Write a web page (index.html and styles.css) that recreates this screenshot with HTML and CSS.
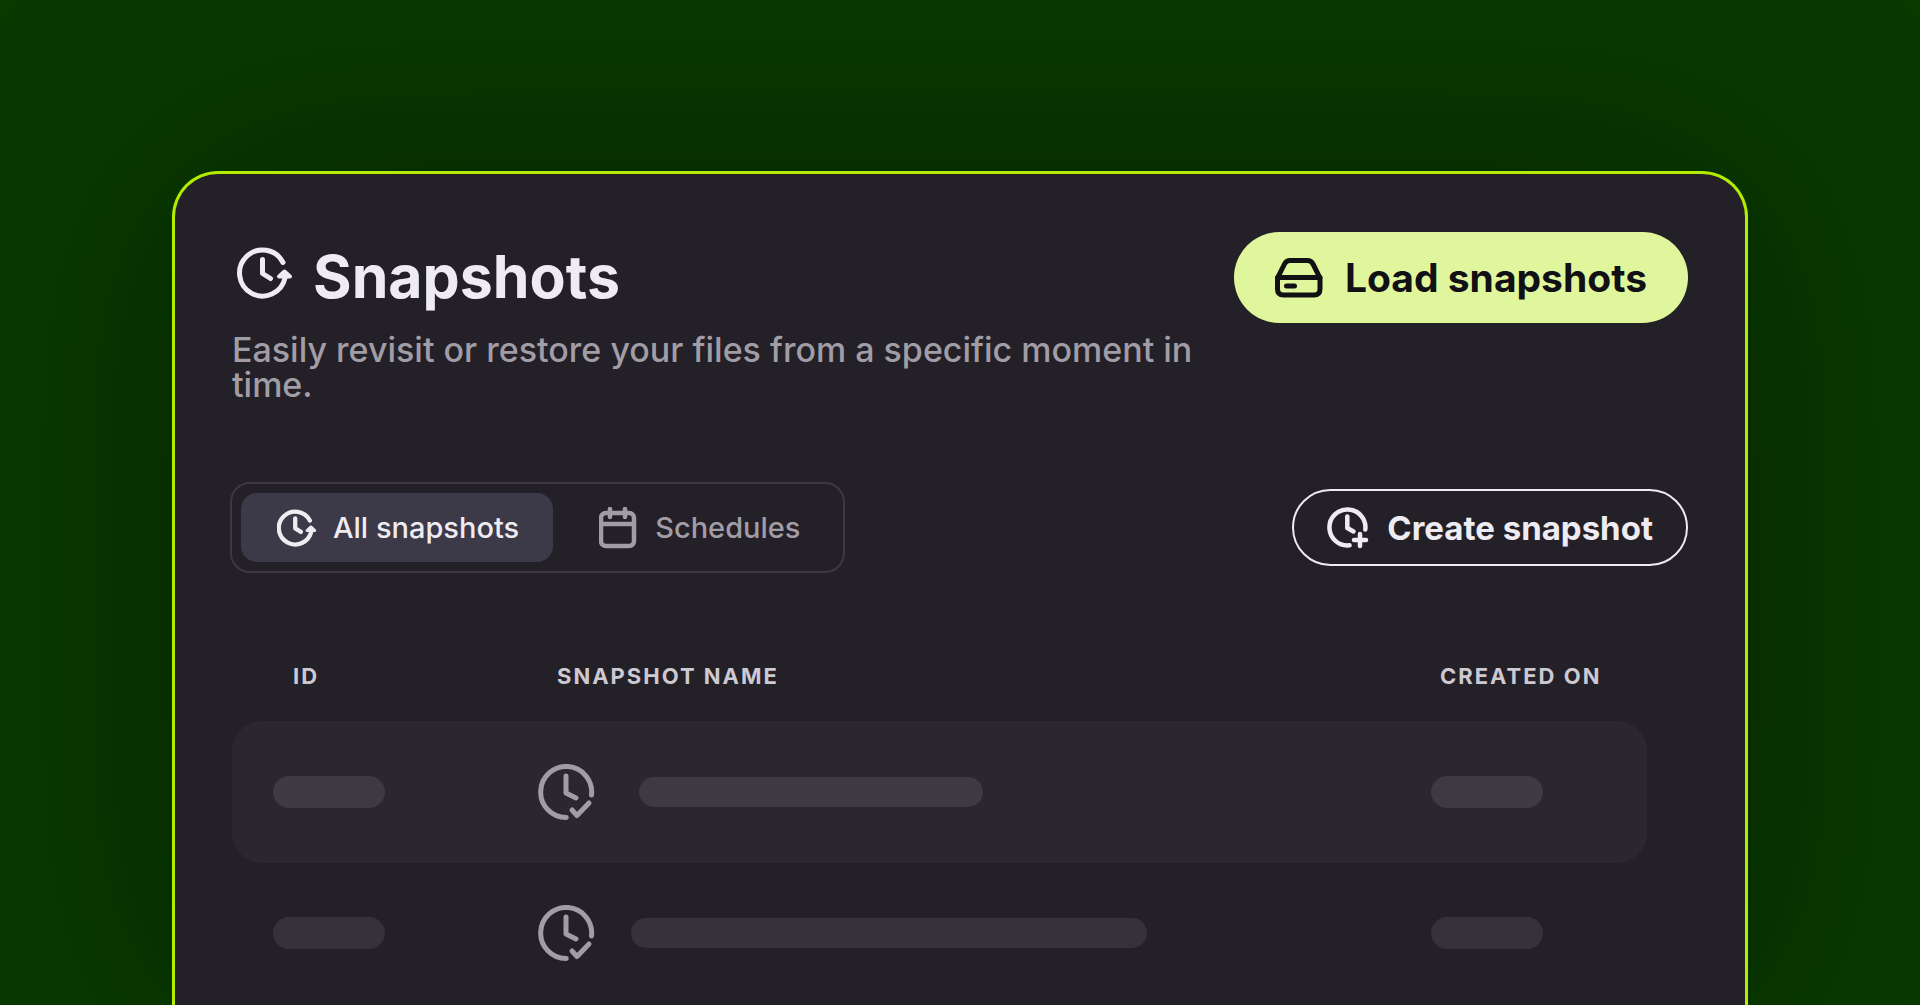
FILE: index.html
```html
<!DOCTYPE html>
<html lang="en">
<head>
    <meta charset="UTF-8">
    <meta name="viewport" content="width=device-width, initial-scale=1.0">
    <title>Snapshots</title>
    <link rel="stylesheet" href="styles.css">
</head>
<body>
    <main class="card">
        <header class="header">
            <div class="intro">
                <h1 class="title">
                    <svg class="title-icon" width="56" height="52" viewBox="0 0 56 52" aria-hidden="true">
                        <path class="line" d="M46 15.5A23 23 0 1 0 48 31"/>
                        <path class="line" d="M25.5 12.5V26.5L33.5 31.5"/>
                        <path class="tip" d="M47.5 24.5L42 29.5H53Z"/>
                    </svg>
                    Snapshots
                </h1>
                <p class="subtitle">Easily revisit or restore your files from a specific moment in time.</p>
            </div>
            <button type="button" class="button button-primary">
                <svg width="48" height="40" viewBox="0 0 48 40" aria-hidden="true">
                    <path class="line" d="M2.5 20L9.5 6Q11.3 2.5 15 2.5H32.5Q36.2 2.5 38 6L45 20V31Q45 37 39 37H8.5Q2.5 37 2.5 31Z"/>
                    <path class="line" d="M2.5 19.5H45M11.5 28H19.5"/>
                </svg>
                Load snapshots
            </button>
        </header>

        <div class="toolbar">
            <nav class="tabs">
                <button type="button" class="tab tab-active">
                    <svg width="40" height="38" viewBox="0 0 56 52" aria-hidden="true">
                        <path class="line" d="M46 15.5A23 23 0 1 0 48 31"/>
                        <path class="line" d="M25.5 12.5V26.5L33.5 31.5"/>
                        <path class="tip" d="M47.5 24.5L42 29.5H53Z"/>
                    </svg>
                    All snapshots
                </button>
                <button type="button" class="tab">
                    <svg width="38" height="42" viewBox="0 0 38 42" aria-hidden="true">
                        <rect class="line" x="2" y="6" width="33" height="33" rx="5"/>
                        <path class="line" d="M2 17H35M11 2V10M26 2V10"/>
                    </svg>
                    Schedules
                </button>
            </nav>
            <button type="button" class="button button-outline">
                <svg width="42" height="42" viewBox="0 0 42 42" aria-hidden="true">
                    <path class="line" d="M38.3 22.5A18 18 0 1 0 22.5 38.3"/>
                    <path class="line" d="M20.3 9.5V21L26.5 24.5M33 27V39M27 33H39"/>
                </svg>
                Create snapshot
            </button>
        </div>

        <table class="table">
            <thead>
                <tr>
                    <th class="col-id">ID</th>
                    <th class="col-name">Snapshot name</th>
                    <th class="col-date">Created on</th>
                </tr>
            </thead>
            <tbody>
                <tr class="row-active">
                    <td class="cell-id"><div class="bar"></div></td>
                    <td>
                        <div class="name">
                            <svg width="57" height="57" viewBox="0 0 57 57" aria-hidden="true">
                                <path class="line" d="M53.5 31A25.5 25.5 0 1 0 28.3 53.5"/>
                                <path class="line" d="M28 12V29L38 34M34 46L39 51.5L51 39"/>
                            </svg>
                            <div class="bar bar-short"></div>
                        </div>
                    </td>
                    <td><div class="bar"></div></td>
                </tr>
                <tr>
                    <td class="cell-id"><div class="bar"></div></td>
                    <td>
                        <div class="name">
                            <svg width="57" height="57" viewBox="0 0 57 57" aria-hidden="true">
                                <path class="line" d="M53.5 31A25.5 25.5 0 1 0 28.3 53.5"/>
                                <path class="line" d="M28 12V29L38 34M34 46L39 51.5L51 39"/>
                            </svg>
                            <div class="bar bar-long"></div>
                        </div>
                    </td>
                    <td><div class="bar"></div></td>
                </tr>
            </tbody>
        </table>
    </main>
</body>
</html>
```
FILE: styles.css
```css
* {
    box-sizing: border-box;
}

body {
    margin: 0;
    padding: 171px 172px 0;
    height: 100vh;
    display: flex;
    overflow: hidden;
    background: #093a00;
    color: #eeebf2;
    font-family: Inter, "Liberation Sans", sans-serif;
}

.card {
    flex: 1;
    min-width: 0;
    padding: 58px 57px 0;
    border: 3px solid #b4ec00;
    border-bottom: none;
    border-radius: 46px 46px 0 0;
    background: #242027;
    box-shadow: 0 0 240px rgba(0, 0, 0, 0.4);
}

/* icons */
svg {
    flex: none;
}

.line {
    fill: none;
    stroke: currentColor;
    stroke-width: 5;
    stroke-linecap: round;
    stroke-linejoin: round;
}

.tip {
    fill: currentColor;
    stroke: currentColor;
    stroke-width: 4;
    stroke-linejoin: round;
}

/* header */
.header {
    display: flex;
    justify-content: space-between;
    align-items: flex-start;
    gap: 40px;
}

.title {
    display: flex;
    align-items: center;
    gap: 20px;
    margin: 0;
    padding: 9px 0 0 5px;
    font-size: 59px;
    line-height: 72px;
    font-weight: 700;
}

.title-icon {
    margin-bottom: 8px;
}

.subtitle {
    margin: 19px 0 0;
    color: #a19da6;
    font-size: 34px;
    line-height: 35px;
    font-weight: 500;
}

.button {
    flex: none;
    display: flex;
    align-items: center;
    border-radius: 46px;
    font-family: inherit;
    font-weight: 700;
    cursor: pointer;
}

.button-primary {
    height: 91px;
    padding: 0 41px;
    gap: 22px;
    border: none;
    background: #e0f69c;
    color: #111015;
    font-size: 39px;
}

.button-outline {
    height: 77px;
    padding: 0 33px;
    gap: 18px;
    border: 2px solid #eeebf2;
    background: none;
    color: #eeebf2;
    font-size: 33px;
}

/* tabs */
.toolbar {
    display: flex;
    justify-content: space-between;
    align-items: center;
    margin-top: 80px;
}

.tabs {
    display: flex;
    gap: 12px;
    margin-left: -2px;
    padding: 9px;
    border: 2px solid #3b3844;
    border-radius: 20px;
}

.tab {
    display: flex;
    align-items: center;
    gap: 18px;
    height: 69px;
    padding: 0 34px;
    border: none;
    border-radius: 16px;
    background: none;
    color: #a19da6;
    font-family: inherit;
    font-size: 29px;
    font-weight: 500;
    cursor: pointer;
}

.tab .line,
.button-outline .line {
    stroke-width: 4.5;
}

.tab-active {
    gap: 16px;
    padding: 0 34px 0 36px;
    background: #3c3948;
    color: #eeebf2;
}

.tab-active .line {
    stroke-width: 6;
}

/* table */
.table {
    width: calc(100% - 41px);
    margin-top: 90px;
    table-layout: fixed;
    border-collapse: separate;
    border-spacing: 0;
}

.table th {
    height: 58px;
    padding: 0;
    color: #cdc9d2;
    font-size: 22px;
    line-height: 26px;
    font-weight: 700;
    letter-spacing: 2px;
    text-align: left;
    text-transform: uppercase;
    vertical-align: top;
    white-space: nowrap;
}

.table .col-id {
    width: 306px;
    padding-left: 61px;
}

.table .col-name {
    padding-left: 19px;
}

.table .col-date {
    width: 216px;
    padding-left: 9px;
}

.table td {
    height: 140px;
    padding: 0;
}

.table .cell-id {
    padding-left: 41px;
}

.table .row-active td {
    height: 142px;
    background: #2b272e;
}

.row-active td:first-child {
    border-radius: 30px 0 0 30px;
}

.row-active td:last-child {
    border-radius: 0 30px 30px 0;
}

.name {
    display: flex;
    align-items: center;
    gap: 36px;
    color: #a19da6;
}

.row-active .name {
    gap: 44px;
}

/* placeholder bars */
.bar {
    width: 112px;
    height: 32px;
    border-radius: 16px;
    background: #36323a;
}

.row-active .bar {
    background: #3e3a41;
}

.name .bar {
    height: 30px;
}

.name .bar-short {
    width: 344px;
}

.name .bar-long {
    width: 516px;
}
```
